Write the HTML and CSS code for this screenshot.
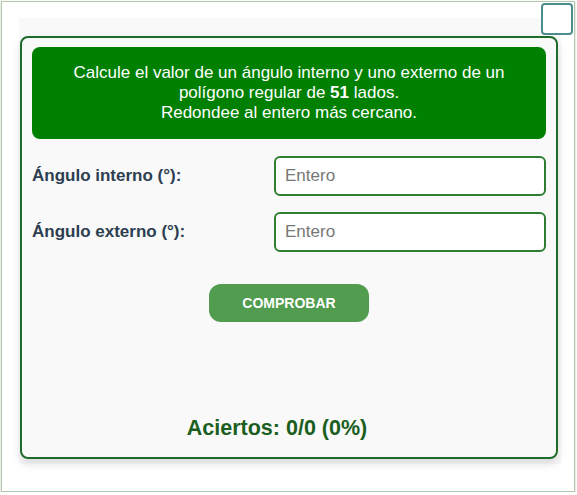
FILE: index.html
```html
<!DOCTYPE html>
<html lang="es">
<head>
    <meta charset="UTF-8">
    <meta name="viewport" content="width=device-width, initial-scale=1.0">
    <title>Ángulos de un polígono regular</title>
    <link rel="stylesheet" href="styles.css">
</head>
<body>
    <div class="frame">
        <div class="focus-box"></div>
        <div class="wrap">
            <div class="card">
                <div class="question">
                    Calcule el valor de un ángulo interno y uno externo de un<br>
                    polígono regular de <b>51</b> lados.<br>
                    Redondee al entero más cercano.
                </div>
                <div class="row">
                    <label for="interno">Ángulo interno (°):</label>
                    <input type="text" id="interno" placeholder="Entero">
                </div>
                <div class="row">
                    <label for="externo">Ángulo externo (°):</label>
                    <input type="text" id="externo" placeholder="Entero">
                </div>
                <button class="check">COMPROBAR</button>
                <div class="score">Aciertos: 0/0 (0%)</div>
            </div>
        </div>
    </div>
</body>
</html>
```

FILE: styles.css
```css
body {
    font-family: 'Liberation Sans', Arial, sans-serif;
    margin: 0;
    padding: 0;
    background-color: white;
}

.frame {
    position: relative;
    margin: 1px 2px 0 1px;
    height: 491px;
    border: 1px solid #b3c7aa;
    box-shadow: 0 1px 2px rgba(120, 160, 110, 0.5);
    box-sizing: border-box;
}

.focus-box {
    position: absolute;
    top: 1px;
    right: 1px;
    width: 28px;
    height: 28px;
    border: 2px solid #4b8d8d;
    border-radius: 4px;
    background-color: white;
}

.wrap {
    margin: 16px 13px 0 17px;
    padding-top: 18px;
    height: 446px;
    background-color: #f9f9f9;
    box-sizing: border-box;
}

.card {
    display: flex;
    flex-direction: column;
    margin-left: 1px;
    width: 538px;
    height: 423px;
    padding: 9px 10px 16px 10px;
    border: 2px solid #1e6b2a;
    border-radius: 8px;
    box-sizing: border-box;
    box-shadow: 0 5px 10px rgba(0, 0, 0, 0.12);
}

.question {
    background-color: #008000;
    color: white;
    font-size: 17px;
    line-height: 20px;
    text-align: center;
    padding: 16px 10px;
    border-radius: 8px;
}

.row {
    display: flex;
    justify-content: space-between;
    align-items: center;
    margin-top: 16px;
}

.question + .row {
    margin-top: 17px;
}

label {
    font-weight: bold;
    font-size: 17px;
    color: #2c3e50;
}

input[type="text"] {
    width: 272px;
    height: 40px;
    padding: 0 9px;
    border: 2px solid #2e7d32;
    border-radius: 6px;
    font-family: 'Liberation Sans', Arial, sans-serif;
    font-size: 17px;
    box-sizing: border-box;
    background-color: white;
}

input::placeholder {
    color: #777;
}

.check {
    align-self: center;
    margin-top: 32px;
    width: 160px;
    height: 38px;
    background-color: #519c4f;
    color: white;
    border: none;
    border-radius: 12px;
    font-family: 'Liberation Sans', Arial, sans-serif;
    font-weight: bold;
    font-size: 14px;
    cursor: pointer;
}

.score {
    margin-top: auto;
    padding-right: 24px;
    text-align: center;
    font-weight: bold;
    font-size: 21.5px;
    color: #1b5e20;
}
```
